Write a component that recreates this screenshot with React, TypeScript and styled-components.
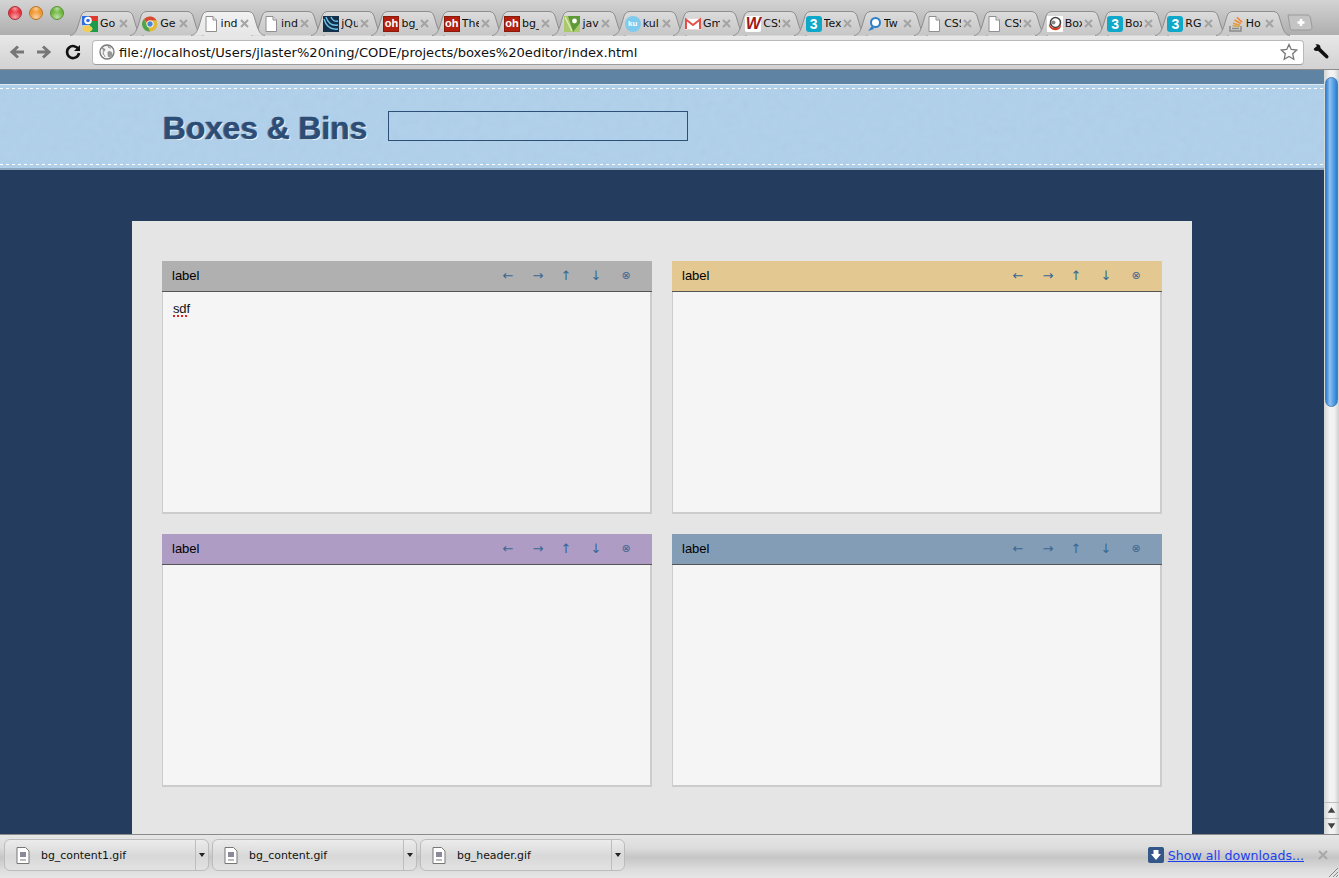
import React from "react";
import styled, { createGlobalStyle } from "styled-components";

const Global = createGlobalStyle`
  html, body { margin: 0; padding: 0; height: 100%; overflow: hidden; background: #243d5f; }
  #root { height: 100%; }
  * { box-sizing: border-box; }
`;

const Shell = styled.div`
  display: flex; flex-direction: column; height: 878px; width: 1339px; overflow: hidden;
  font-family: "Liberation Sans", Arial, sans-serif;
`;

/* ---------- tab strip ---------- */
const TabStrip = styled.div`
  position: relative; display: flex; align-items: flex-end; height: 35px; flex: none;
  padding-left: 70px; padding-bottom: 0;
  background: linear-gradient(#d4d4d4 0, #c9c9c9 10px, #aeaeae 100%);
`;
const Lights = styled.div`
  position: absolute; left: 8px; top: 6px; display: flex; gap: 7px;
`;
const Light = styled.span<{ $c: string; $d: string }>`
  width: 14px; height: 14px; border-radius: 50%; border: 1px solid ${p => p.$d};
  background: radial-gradient(circle at 50% 85%, #ffffff90 0, transparent 55%), radial-gradient(circle at 50% 15%, #fff8 0, transparent 35%), ${p => p.$c};
`;
const TabItem = styled.div<{ $active?: boolean }>`
  position: relative; width: 60.3px; height: 24px; flex: none; z-index: ${p => (p.$active ? 2 : 1)};
  display: flex; align-items: center; padding-left: 12px; font-size: 11px;
  font-family: "DejaVu Sans", sans-serif; color: #111;
`;
const TabShape = styled.svg`
  position: absolute; left: 0; top: 0; width: 74px; height: 24px; overflow: visible;
`;
const TabIcon = styled.span`
  position: relative; width: 16px; height: 16px; flex: none; display: block; margin-top: 1px;
`;
const TabLabel = styled.span`
  position: relative; width: 17px; margin-left: 2px; overflow: hidden; white-space: nowrap; margin-top: 1px;
`;
const TabClose = styled.svg`
  position: relative; width: 9px; height: 9px; flex: none; margin-left: 2px; margin-top: 1px;
`;
const NewTab = styled.svg`
  position: relative; width: 26px; height: 17px; margin: 0 0 4px 11px; flex: none;
`;

/* ---------- toolbar ---------- */
const Toolbar = styled.div`
  display: flex; align-items: center; height: 35px; flex: none; padding: 0 8px 0 8px;
  background: linear-gradient(#e8e8e8, #d2d2d2); border-bottom: 1px solid #8d8d8d;
`;
const NavIcon = styled.svg`
  width: 18px; height: 18px; flex: none; margin-right: 9px;
`;
const ReloadIcon = styled(NavIcon)`
  margin-left: 2px;
`;
const Omnibox = styled.div`
  display: flex; align-items: center; width: 1212px; height: 25px; margin-left: 1px; padding: 0 5px 0 6px;
  background: #fff; border: 1px solid #b9b9b9; border-bottom-color: #9c9c9c; border-radius: 4px;
  font-family: "DejaVu Sans", sans-serif; font-size: 13.08px; color: #111;
`;
const Url = styled.span`
  flex: 1; margin-left: 4px; white-space: nowrap;
`;
const Wrench = styled.svg`
  width: 18px; height: 18px; flex: none; margin-left: 8px;
`;

/* ---------- page ---------- */
const Middle = styled.div`
  display: flex; flex: 1; min-height: 0;
`;
const Page = styled.div`
  flex: 1; min-width: 0; overflow: hidden; background: #243d5f;
`;
const TopStrip = styled.div`
  height: 15px; background: #5e83a3; border-bottom: 1px solid #dfe9f2;
`;
const Masthead = styled.header`
  position: relative; height: 85px; background: #b0d0eb; border-bottom: 2px solid #8ea7bf;
  display: flex; align-items: center; padding: 0 0 0 163px; gap: 21px;
  &::before, &::after {
    content: ""; position: absolute; left: 0; right: 0; height: 1px;
    background: repeating-linear-gradient(90deg, #fff 0 3px, transparent 3px 6px);
  }
  &::before { top: 3px; }
  &::after { bottom: 3px; }
`;
const Paper = styled.svg`
  position: absolute; inset: 0; width: 100%; height: 100%; opacity: 0.07;
`;
const Title = styled.h1`
  position: relative; margin: 4px 0 0; font: bold 31.7px/1 "Liberation Sans", Arial, sans-serif; color: #2c4d76;
  text-shadow: 1px 1px 0 #eef5fb, -1px 0 0 #6a6f86;
  -webkit-text-stroke: 0.3px #2c4d76;
`;
const NameInput = styled.input`
  position: relative; width: 300px; height: 30px; background: transparent; border: 1px solid #2d5078; padding: 0; margin: 0 0 1px;
  outline: none;
`;
const Panel = styled.main`
  width: 1060px; margin: 51px 0 0 132px; padding: 40px 30px; background: #e5e5e5; height: 700px;
  display: grid; grid-template-columns: 490px 490px; grid-auto-rows: 253px; gap: 20px;
`;
const Box = styled.section`
  display: flex; flex-direction: column;
`;
const BoxHead = styled.div<{ $c: string }>`
  height: 31px; flex: none; display: flex; align-items: center; padding-left: 10px;
  background: ${p => p.$c}; border-bottom: 1px solid #555; font-size: 13px; color: #000;
`;
const BoxLabel = styled.span`
  flex: 1; margin-top: -1px;
`;
const BoxTools = styled.div`
  display: grid; grid-template-columns: 30px 30px 26px 34px 26px; margin-right: 13px; margin-top: -1px;
`;
const BoxTool = styled.span`
  text-align: center; color: #3a6792; font-size: 13px; line-height: 16px; font-family: "DejaVu Sans", sans-serif;
`;
const BoxClose = styled(BoxTool)`
  font-size: 11px;
`;
const BoxBody = styled.div`
  flex: 1; background: #f5f5f5; border: 2px solid #ccc; border-width: 0 2px 2px 1px;
  padding: 9px 10px; font-size: 13px; line-height: 16px; color: #111; letter-spacing: -0.15px;
`;
const Misspelt = styled.span`
  text-decoration: underline dotted #e02020 2px; text-underline-offset: 2px;
`;

/* ---------- scrollbar ---------- */
const Scrollbar = styled.div`
  width: 15px; flex: none; display: flex; flex-direction: column; padding: 7px 1px 0;
  background: linear-gradient(90deg, #d4d4d4, #f4f4f4 40%, #f0f0f0 70%, #cfcfcf);
`;
const Thumb = styled.div`
  height: 330px; width: 13px; border-radius: 7px; border: 1px solid #4d7eb0;
  background: linear-gradient(90deg, #2f7fd0, #8fc1f0 35%, #5fa6ea 60%, #2f7ccc);
`;
const ScrollButtons = styled.div`
  margin-top: auto; width: 15px; margin-left: -1px; display: flex; flex-direction: column;
`;
const ScrollBtn = styled.svg`
  width: 15px; height: 16px; display: block; border-top: 1px solid #bdbdbd;
`;

/* ---------- download shelf ---------- */
const Shelf = styled.footer`
  height: 44px; flex: none; display: flex; align-items: center; padding: 0 0 3px 4px; gap: 3px; position: relative;
  border-top: 1px solid #8a8a8a;
  background: linear-gradient(#e6e6e6 0, #dcdcdc 30%, #c6c6c6 52%, #dcdcdc 80%, #e6e6e6 100%);
`;
const Download = styled.div`
  width: 205px; height: 32px; display: flex; align-items: center; flex: none;
  border: 1px solid #bcbcbc; border-radius: 6px;
  background: linear-gradient(#ececec, #d8d8d8 55%, #e2e2e2);
  font-family: "DejaVu Sans", sans-serif; font-size: 10.9px; color: #111;
`;
const FileIcon = styled.svg`
  width: 14px; height: 17px; margin-left: 11px; flex: none;
`;
const FileName = styled.span`
  flex: 1; margin-left: 11px;
`;
const Caret = styled.span`
  width: 13px; align-self: stretch; border-left: 1px solid #bdbdbd; display: flex; align-items: center; justify-content: center;
  &::after { content: ""; border: 3px solid transparent; border-top: 4px solid #222; border-bottom: 0; }
`;
const ShelfRight = styled.div`
  margin-left: auto; display: flex; align-items: center; padding-right: 11px;
`;
const DownloadBadge = styled.svg`
  width: 16px; height: 16px; flex: none;
`;
const ShowAll = styled.a`
  font-family: "DejaVu Sans", sans-serif; font-size: 12.6px; color: #1b3ff0; text-decoration: underline; margin-left: 4px;
`;
const ShelfClose = styled.svg`
  width: 10px; height: 10px; margin-left: 14px;
`;
const Grip = styled.svg`
  position: absolute; right: 0; bottom: 0; width: 13px; height: 13px;
`;

/* ---------- favicons ---------- */
const Badge = styled.span<{ $bg: string; $fg?: string; $size?: number; $round?: boolean }>`
  display: flex; width: 16px; height: 16px; align-items: center; justify-content: center;
  background: ${p => p.$bg}; color: ${p => p.$fg ?? "#fff"}; font: bold ${p => p.$size ?? 11}px/1 "Liberation Sans", sans-serif;
  border-radius: ${p => (p.$round ? "50%" : "2px")};
`;
const SquareBadge = styled(Badge)`
  border-radius: 3px;
`;
const OhBadge = styled(Badge)`
  border-radius: 0; border: 1px solid #8a1a0c;
`;

const Doc = () => (
  <svg width="16" height="16" viewBox="0 0 16 16">
    <path d="M3 .5h7l3.5 3.5v11.5H3z" fill="#fff" stroke="#8f8f8f" />
    <path d="M10 .5V4h3.5" fill="#e4e4e4" stroke="#8f8f8f" />
  </svg>
);

type Kind = "google" | "chrome" | "doc" | "jquery" | "oh" | "jav" | "ku" | "gmail" | "w" | "three" | "tw" | "bo" | "so";

const Favicon = ({ kind }: { kind: Kind }) => {
  switch (kind) {
    case "google":
      return (
        <svg width="16" height="16" viewBox="0 0 16 16">
          <rect x="0" y="0" width="8" height="9" fill="#2f6ee0" />
          <rect x="8" y="0" width="8" height="5" fill="#e03a2c" />
          <rect x="8" y="5" width="8" height="11" fill="#1e9a4c" />
          <circle cx="6" cy="4.500" r="3.800" fill="#fff" />
          <circle cx="6" cy="4.500" r="1.800" fill="#2f6ee0" />
          <ellipse cx="5.500" cy="12.800" rx="5" ry="3.200" fill="#f3cc54" />
        </svg>
      );
    case "chrome":
      return (
        <svg width="16" height="16" viewBox="0 0 16 16">
          <circle cx="8" cy="8" r="7.500" fill="#e2b93a" />
          <path d="M8 .5A7.500 7.500 0 0 1 14.500 4.300H8A3.800 3.800 0 0 0 4.600 6.500L2 3A7.500 7.500 0 0 1 8 .5z" fill="#d9473a" />
          <path d="M2 3l3.400 6.500L8 15.500A7.500 7.500 0 0 1 2 3z" fill="#4da64a" />
          <circle cx="8" cy="8" r="3.600" fill="#fff" />
          <circle cx="8" cy="8" r="2.700" fill="#4a86d8" />
        </svg>
      );
    case "jquery":
      return (
        <svg width="16" height="16" viewBox="0 0 16 16">
          <rect width="16" height="16" fill="#15304a" />
          <path d="M1 3c2 7 7 11 14 10M3 1c2 6 6 9 12 8M8 1c1 3 4 5 7 4" fill="none" stroke="#6cc0e8" strokeWidth="1.400" />
        </svg>
      );
    case "oh":
      return <OhBadge $bg="#b3200f">oh</OhBadge>;
    case "jav":
      return (
        <svg width="16" height="16" viewBox="0 0 16 16">
          <rect width="16" height="16" fill="#a9c96a" />
          <path d="M4 0h12v7c-3 4-5 6-7 9z" fill="#5f9a3a" />
          <circle cx="10.500" cy="5" r="2.400" fill="#fff" />
          <path d="M1 1l7 14" stroke="#dbe9b8" strokeWidth="1.500" />
        </svg>
      );
    case "ku":
      return <Badge $bg="#7ecbee" $size={8} $round>ku</Badge>;
    case "gmail":
      return (
        <svg width="16" height="16" viewBox="0 0 16 16">
          <rect x="0.500" y="2.500" width="15" height="11" fill="#fff" stroke="#e8d8d8" />
          <path d="M1 13V3.500l7 5.500 7-5.500V13" fill="none" stroke="#e2504a" strokeWidth="2" />
        </svg>
      );
    case "w":
      return (
        <Badge $bg="#fff" $fg="#a01818" $size={16}>
          <i>W</i>
        </Badge>
      );
    case "three":
      return <SquareBadge $bg="#0fa8c9" $size={14}>3</SquareBadge>;
    case "tw":
      return (
        <svg width="16" height="16" viewBox="0 0 16 16">
          <circle cx="9.500" cy="6.500" r="4.500" fill="#fff" stroke="#2a7fc8" strokeWidth="2" />
          <path d="M6 10L2 15l6-2z" fill="#2a7fc8" />
        </svg>
      );
    case "bo":
      return (
        <svg width="16" height="16" viewBox="0 0 16 16">
          <rect width="16" height="16" fill="#fff" />
          <circle cx="8.500" cy="6.500" r="5" fill="none" stroke="#444" strokeWidth="1.600" />
          <path d="M2 7c-1 5 4 8 8 7s4-4 4-6c-1 3-3 4-6 4S3 10 2 7z" fill="#d43a22" />
          <circle cx="6.500" cy="6.500" r="2" fill="#888" />
        </svg>
      );
    case "so":
      return (
        <svg width="16" height="16" viewBox="0 0 16 16">
          <path d="M2 10v5h11v-5" fill="none" stroke="#8b8b8b" strokeWidth="1.500" />
          <path d="M4 12.500h7" stroke="#8b8b8b" strokeWidth="1.400" />
          <path d="M4.500 9.800l7 .6" stroke="#d7a24a" strokeWidth="1.500" />
          <path d="M5 7.200l7 2" stroke="#e39a3a" strokeWidth="1.500" />
          <path d="M6.500 4l6.300 3.600" stroke="#ee8a2c" strokeWidth="1.500" />
          <path d="M9 1.200l5 5" stroke="#f47f24" strokeWidth="1.500" />
        </svg>
      );
    default:
      return <Doc />;
  }
};

const tabs: { kind: Kind; label: string }[] = [
  { kind: "google", label: "Go" },
  { kind: "chrome", label: "Ge" },
  { kind: "doc", label: "ind" },
  { kind: "doc", label: "ind" },
  { kind: "jquery", label: "jQu" },
  { kind: "oh", label: "bg_" },
  { kind: "oh", label: "The" },
  { kind: "oh", label: "bg_" },
  { kind: "jav", label: "jav" },
  { kind: "ku", label: "kul" },
  { kind: "gmail", label: "Gm" },
  { kind: "w", label: "CSS" },
  { kind: "three", label: "Tex" },
  { kind: "tw", label: "Tw" },
  { kind: "doc", label: "CSS" },
  { kind: "doc", label: "CSS" },
  { kind: "bo", label: "Box" },
  { kind: "three", label: "Box" },
  { kind: "three", label: "RG" },
  { kind: "so", label: "Ho" },
];

const Tab = ({ kind, label, index }: { kind: Kind; label: string; index: number }) => {
  const active = index === 2;
  const fill = active ? "url(#tabActive)" : "url(#tabIdle)";
  return (
    <TabItem $active={active}>
      <TabShape viewBox="0 0 74 24">
        <path
          d="M0 24.500C4 24 6 21 8 15L11 5C12 2 14 .5 17 .5H57C60 .5 62 2 63 5L66 15C68 21 70 24 74 24.500"
          fill={fill}
          stroke="#8e8e8e"
        />
      </TabShape>
      <TabIcon>
        <Favicon kind={kind} />
      </TabIcon>
      <TabLabel>{label}</TabLabel>
      <TabClose viewBox="0 0 9 9">
        <path d="M1 1l7 7M8 1L1 8" stroke="#a4a4a4" strokeWidth="2" />
      </TabClose>
    </TabItem>
  );
};

const boxes = ["#b0b0b0", "#e3c891", "#ae9cc5", "#839db6"];

export default function App() {
  return (
    <Shell>
      <Global />
      <TabStrip>
        <svg width="0" height="0" style={{ position: "absolute" }}>
          <defs>
            <linearGradient id="tabIdle" x1="0" y1="0" x2="0" y2="1">
              <stop offset="0" stopColor="#dcdcdc" />
              <stop offset="1" stopColor="#c6c6c6" />
            </linearGradient>
            <linearGradient id="tabActive" x1="0" y1="0" x2="0" y2="1">
              <stop offset="0" stopColor="#f2f2f2" />
              <stop offset="1" stopColor="#e6e6e6" />
            </linearGradient>
            <filter id="paperNoise">
              <feTurbulence type="fractalNoise" baseFrequency="0.12" numOctaves="3" />
              <feColorMatrix type="saturate" values="0" />
            </filter>
          </defs>
        </svg>
        <Lights>
          <Light $c="#e8323c" $d="#a8343a" />
          <Light $c="#f0962c" $d="#b4792e" />
          <Light $c="#6cb63c" $d="#5d923e" />
        </Lights>
        {tabs.map((t, i) => (
          <Tab key={i} index={i} kind={t.kind} label={t.label} />
        ))}
        <NewTab viewBox="0 0 26 17">
          <path d="M1 1h19c2 0 3 1 3.500 3l1.500 9c0 2-1 3-3 3H6c-2 0-3-1-3-3z" fill="#c4c4c4" stroke="#9a9a9a" />
          <path d="M14 5v7M10.500 8.500h7" stroke="#fff" strokeWidth="2.500" />
        </NewTab>
      </TabStrip>
      <Toolbar>
        <NavIcon viewBox="0 0 18 18">
          <path d="M16 9H5M10 3.500L4 9l6 5.500" fill="none" stroke="#777" strokeWidth="3" />
        </NavIcon>
        <NavIcon viewBox="0 0 18 18">
          <path d="M2 9h11M8 3.500L14 9l-6 5.500" fill="none" stroke="#777" strokeWidth="3" />
        </NavIcon>
        <ReloadIcon viewBox="0 0 18 18">
          <path d="M14.500 6.500A6 6 0 1 0 15 10" fill="none" stroke="#111" strokeWidth="2.600" />
          <path d="M16 2v6h-6z" fill="#111" />
        </ReloadIcon>
        <Omnibox>
          <svg width="16" height="16" viewBox="0 0 16 16" style={{ flex: "none" }}>
            <circle cx="8" cy="8" r="7" fill="#f4f4f4" stroke="#777" strokeWidth="1.300" />
            <path d="M3 4c2 0 3 1 3 2s-2 1-2 3 2 2 2 4M9 2c0 2 2 2 3 2M9 8c2-1 4 0 4 2s-2 3-3 3-1-3-1-5z" fill="#999" stroke="#888" strokeWidth="0.800" />
          </svg>
          <Url>file://localhost/Users/jlaster%20ning/CODE/projects/boxes%20editor/index.html</Url>
          <svg width="18" height="18" viewBox="0 0 18 18" style={{ flex: "none" }}>
            <path d="M9 1.500l2.300 5 5.400.6-4 3.700 1.100 5.400L9 13.500 4.200 16.200l1.100-5.400-4-3.700 5.400-.6z" fill="#fff" stroke="#777" strokeWidth="1.300" />
          </svg>
        </Omnibox>
        <Wrench viewBox="0 0 18 18">
          <path d="M2 5.500L5 3 3.500 1.500C6 .5 9 2 8.500 5l7.500 7.500c1.500 1.500-.5 4-2.300 2.500L6 7.700C3.500 8.500 1 7 2 5.500z" fill="#111" />
        </Wrench>
      </Toolbar>
      <Middle>
        <Page>
          <TopStrip />
          <Masthead>
            <Paper aria-hidden="true">
              <rect width="100%" height="100%" filter="url(#paperNoise)" />
            </Paper>
            <Title>Boxes &amp; Bins</Title>
            <NameInput aria-label="name" />
          </Masthead>
          <Panel>
            {boxes.map((c, i) => (
              <Box key={i}>
                <BoxHead $c={c}>
                  <BoxLabel>label</BoxLabel>
                  <BoxTools>
                    <BoxTool>←</BoxTool>
                    <BoxTool>→</BoxTool>
                    <BoxTool>↑</BoxTool>
                    <BoxTool>↓</BoxTool>
                    <BoxClose>⊗</BoxClose>
                  </BoxTools>
                </BoxHead>
                <BoxBody>{i === 0 && <Misspelt>sdf</Misspelt>}</BoxBody>
              </Box>
            ))}
          </Panel>
        </Page>
        <Scrollbar>
          <Thumb />
          <ScrollButtons>
            <ScrollBtn viewBox="0 0 15 16">
              <path d="M7.500 4.500l4 6h-8z" fill="#444" />
            </ScrollBtn>
            <ScrollBtn viewBox="0 0 15 16">
              <path d="M7.500 10.500l4-6h-8z" fill="#444" />
            </ScrollBtn>
          </ScrollButtons>
        </Scrollbar>
      </Middle>
      <Shelf>
        {["bg_content1.gif", "bg_content.gif", "bg_header.gif"].map(n => (
          <Download key={n}>
            <FileIcon viewBox="0 0 14 17">
              <path d="M1 .5h8.500L13 4v12.500H1z" fill="#fff" stroke="#777" />
              <rect x="4" y="5" width="6" height="5" fill="#8a8a9a" />
              <rect x="4" y="12" width="6" height="2" fill="#bbb" />
            </FileIcon>
            <FileName>{n}</FileName>
            <Caret />
          </Download>
        ))}
        <ShelfRight>
          <DownloadBadge viewBox="0 0 16 16">
            <rect width="16" height="16" rx="2" fill="#34578a" />
            <path d="M5.500 3h5v4H13l-5 6-5-6h2.500z" fill="#fff" />
          </DownloadBadge>
          <ShowAll href="#">Show all downloads...</ShowAll>
          <ShelfClose viewBox="0 0 10 10">
            <path d="M1 1l8 8M9 1L1 9" stroke="#a8a8a8" strokeWidth="2" />
          </ShelfClose>
        </ShelfRight>
        <Grip viewBox="0 0 13 13">
          <path d="M12 3L3 12M12 7l-5 5M12 10l-2 2" stroke="#888" />
        </Grip>
      </Shelf>
    </Shell>
  );
}
